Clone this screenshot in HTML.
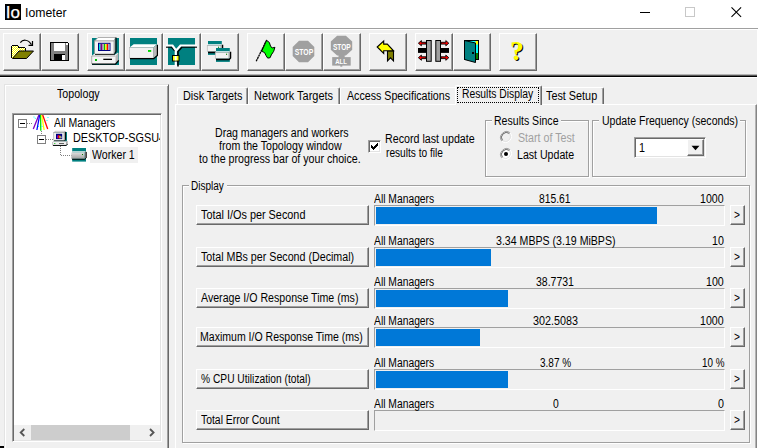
<!DOCTYPE html>
<html><head><meta charset="utf-8"><title>Iometer</title>
<style>
html,body{margin:0;padding:0;}
body{width:758px;height:448px;overflow:hidden;background:#f0f0f0;position:relative;font-family:"Liberation Sans",sans-serif;font-size:12.5px;color:#000;}
.a{position:absolute;}
.t{position:absolute;white-space:nowrap;line-height:14px;height:14px;transform-origin:0 0;display:block;}
.tb{position:absolute;top:33px;width:36px;height:36px;background:#f0f0f0;border-top:1px solid #fff;border-left:1px solid #fff;border-right:1px solid #696969;border-bottom:1px solid #696969;box-shadow:inset -1px -1px 0 #a0a0a0;}
.tb svg{position:absolute;left:0;top:0;}
.btn{position:absolute;background:#f0f0f0;border-top:1px solid #fff;border-left:1px solid #fff;border-right:1px solid #696969;border-bottom:1px solid #696969;box-shadow:inset -1px -1px 0 #a0a0a0;box-sizing:border-box;}
.sunk{position:absolute;box-sizing:border-box;border-top:1px solid #a0a0a0;border-left:1px solid #a0a0a0;border-right:1px solid #fff;border-bottom:1px solid #fff;}
.grp{position:absolute;box-sizing:border-box;border:1px solid #a0a0a0;box-shadow:1px 1px 0 #fff, inset 1px 1px 0 #fff;}
.bar{position:absolute;background:#0078d7;height:17px;}
.h{position:absolute;height:1px;}
.v{position:absolute;width:1px;}
</style></head><body>
<!-- title bar -->
<div class="a" style="left:0;top:0;width:758px;height:28px;background:#fff;"></div>
<div class="a" style="left:5px;top:4px;width:16px;height:16px;background:#000;"></div>
<div class="t" style="left:5.7px;top:5.8px;color:#fff;font-size:17px;-webkit-text-stroke:0.25px #fff;">Io</div>
<svg class="a" style="left:630px;top:0" width="128" height="28" viewBox="0 0 128 28">
<path d="M10 12.500h10" stroke="#000" stroke-width="1" fill="none"/>
<rect x="55.500" y="7.500" width="9" height="9" stroke="#c8c8c8" fill="none"/>
<path d="M101.500 7.300l9.600 9.600M111.100 7.300l-9.600 9.600" stroke="#000" stroke-width="1.100" fill="none"/>
</svg>
<!-- toolbar -->
<div class="h" style="left:0;top:28px;width:758px;background:#a0a0a0;"></div>
<div class="h" style="left:0;top:29px;width:758px;background:#fff;"></div>
<div class="h" style="left:0;top:74px;width:757px;background:#b4b4b4;"></div>
<div class="h" style="left:0;top:75px;width:757px;background:#555;"></div>
<div class="h" style="left:0;top:76px;width:757px;background:#000;"></div>
<div class="h" style="left:0;top:77px;width:757px;background:#fff;"></div>
<div class="v" style="left:757px;top:29px;height:419px;background:#fff;"></div>
<!-- toolbar buttons -->
<div class="tb" style="left:3px"><svg width="36" height="36" viewBox="4 34 36 36" shape-rendering="crispEdges">
<defs><pattern id="dot" width="2" height="2" patternUnits="userSpaceOnUse"><rect width="2" height="2" fill="#ffff00"/><rect width="1" height="1" fill="#fff"/><rect x="1" y="1" width="1" height="1" fill="#fff"/></pattern></defs>
<path d="M11.5 58V46.5l1-1h5l1 1v1h6l1 1v2.500" fill="url(#dot)" stroke="#000"/>
<path d="M12.500 58.500h14l7-7.500h-14.500z" fill="#808000" stroke="#000" shape-rendering="auto"/>
<path d="M20.300 42.600c2.200-3 7.500-4 11.200 2" fill="none" stroke="#000" stroke-width="1.200" shape-rendering="auto"/>
<path d="M28.500 45.300h4v-4.300" fill="none" stroke="#000" stroke-width="1.200" shape-rendering="auto"/>
</svg></div>
<div class="tb" style="left:41px"><svg width="36" height="36" viewBox="42 34 36 36" shape-rendering="crispEdges">
<path d="M50.500 42.500h17l1 1v17h-18z" fill="#808080" stroke="#000"/>
<rect x="54" y="43" width="11" height="8" fill="#fff"/>
<rect x="54" y="54" width="11" height="6" fill="#000"/>
<rect x="62" y="55" width="3" height="5" fill="#fff"/>
<rect x="66" y="43" width="2" height="2" fill="#fff"/>
</svg></div>
<div class="tb" style="left:87px"><svg width="36" height="36" viewBox="88 34 36 36">
<rect x="92" y="38" width="27" height="27" fill="#008080"/>
<path d="M94.500 41l3.500-3.500h17.500l-1.500 3.500z" fill="#fff" stroke="#909090" stroke-width=".7"/>
<path d="M114 41l1.500-3.500v13.500l-1.500 3z" fill="#b8b8b8"/>
<path d="M116 37.500v14l-2 3h-19.500" stroke="#000" stroke-width="1.200" fill="none"/>
<rect x="94.500" y="41" width="19.500" height="13" fill="#f4f4f4" stroke="#909090" stroke-width=".7"/>
<rect x="98.500" y="43.300" width="11.500" height="7.200" fill="#d0d0d0" stroke="#000080" stroke-width="1"/>
<rect x="99" y="44" width="1.500" height="6" fill="#00e0e0"/><rect x="100.500" y="44" width="2" height="6" fill="#800080"/><rect x="102.500" y="44" width="1.500" height="6" fill="#b0b0b0"/><rect x="104" y="44" width="1.200" height="6" fill="#00c000"/><rect x="105.200" y="44" width="1.500" height="6" fill="#ffff00"/><rect x="106.700" y="44" width="1.300" height="6" fill="#ff0000"/><rect x="108" y="44" width="1.500" height="6" fill="#b0a0c0"/>
<path d="M91.500 56l2.500-2h1v1h19.500l3.500-2.500v8l-3 3.500h-23.500z" fill="#f4f4f4"/>
<path d="M115.500 56l3-3.500v8l-3 3.500z" fill="#b8b8b8"/>
<path d="M91.700 64v-8h23.500" stroke="#909090" stroke-width=".7" fill="none"/>
<path d="M92 64.200h23.500l3.200-3.800" stroke="#000" stroke-width="1.200" fill="none"/>
<rect x="95" y="59" width="2" height="2" fill="#00c000"/>
<rect x="103.300" y="58.700" width="8.700" height="1.300" fill="#000"/>
</svg></div>
<div class="tb" style="left:125px"><svg width="36" height="36" viewBox="126 34 36 36">
<rect x="130" y="38" width="27" height="27" fill="#008080"/>
<path d="M129.500 47.500l4.200-3.200h23.300l-3.700 3.200z" fill="#fff"/>
<path d="M153.300 47.500l3.700-2.800v10.500l-3.700 3z" fill="#b8b8b8"/>
<rect x="129.500" y="47.500" width="23.800" height="10.600" fill="#f2f2f2" stroke="#a8a8a8" stroke-width=".5"/>
<path d="M130 58.700h23.700l3.700-3.200v-10.700" stroke="#000" fill="none" stroke-width="1.200"/>
<rect x="148" y="50" width="3.200" height="1.900" fill="#00d800"/>
</svg></div>
<div class="tb" style="left:163px"><svg width="36" height="36" viewBox="164 34 36 36">
<rect x="168" y="38" width="27" height="27" fill="#008080"/>
<path d="M166 47h5.500l3.500 4M197 47h-15l-4 4.500v15" stroke="#000" stroke-width="1.600" fill="none"/>
<path d="M166 45.500h6.500l3.300 4.500v16.500M197 45.500h-16.500l-4.300 5" stroke="#fff" stroke-width="2.200" fill="none" stroke-linejoin="miter"/>
<rect x="172.500" y="55.500" width="6.500" height="5.500" fill="#ffff00" stroke="#000" stroke-width="1"/>
<rect x="174.700" y="56" width="2" height="4.500" fill="#fff"/>
</svg></div>
<div class="tb" style="left:201px"><svg width="36" height="36" viewBox="202 34 36 36">
<rect x="208" y="41" width="13.800" height="13.900" fill="#008080"/>
<path d="M207.2 45.3l1-1h14l-1.200 1z" fill="#fff"/>
<path d="M220.9 45.3l1.200-1v6.500l-1.200 1z" fill="#b0b0b0"/>
<rect x="207.2" y="45.3" width="13.700" height="6.300" fill="#f2f2f2" stroke="#a0a0a0" stroke-width=".5"/>
<path d="M208 52.5h13.200l1.400-1.400v-6.400" stroke="#000" fill="none" stroke-width="1.300"/>
<rect x="218" y="46.7" width="1.100" height="1.100" fill="#008000"/>
<rect x="216" y="48" width="13.800" height="13.900" fill="#008080"/>
<path d="M215.2 52.3l1-1h14l-1.200 1z" fill="#fff"/>
<path d="M228.9 52.3l1.200-1v6.500l-1.200 1z" fill="#b0b0b0"/>
<rect x="215.2" y="52.3" width="13.700" height="6.300" fill="#f2f2f2" stroke="#a0a0a0" stroke-width=".5"/>
<path d="M216 59.5h13.200l1.400-1.400v-6.400" stroke="#000" fill="none" stroke-width="1.300"/>
<rect x="226" y="53.7" width="1.100" height="1.100" fill="#008000"/>
</svg></div>
<div class="tb" style="left:247px"><svg width="36" height="36" viewBox="248 34 36 36">
<path d="M256.200 61.300l10.500-21.300" stroke="#000" stroke-width="1.300" fill="none" stroke-dasharray="2.200 .5"/>
<path d="M266.600 40.400l2.700 2l1.200 3.600l1.600 2l2.800-.7l-1.200 4l-2.400 3.600l-1.200 2.800l-2.400.4l-1.600-2.400l-1.600-3.200l-2.800-1.200z" fill="#00ff00" stroke="#000" stroke-width="1"/>
</svg></div>
<div class="tb" style="left:285px"><svg width="36" height="36" viewBox="286 34 36 36">
<path d="M299.0 40.8L308.0 40.8L314.3 47.1L314.3 55.9L308.0 62.2L299.0 62.2L292.7 55.9L292.7 47.1z" fill="#a0a0a0"/>
<text x="304" y="55.300" font-family="Liberation Sans,sans-serif" font-weight="bold" font-size="9.500" fill="#fff" text-anchor="middle" textLength="18.500" lengthAdjust="spacingAndGlyphs">STOP</text>
</svg></div>
<div class="tb" style="left:323px"><svg width="36" height="36" viewBox="324 34 36 36">
<path d="M337.1 35.8L345.9 35.8L352.2 41.6L352.2 49.8L345.9 55.6L337.1 55.6L330.8 49.8L330.8 41.6z" fill="#a0a0a0"/>
<rect x="338.500" y="55" width="6.200" height="3" fill="#a0a0a0"/>
<text x="341.800" y="50" font-family="Liberation Sans,sans-serif" font-weight="bold" font-size="9" fill="#fff" text-anchor="middle" textLength="17.800" lengthAdjust="spacingAndGlyphs">STOP</text>
<rect x="332.200" y="57.100" width="18.500" height="8.500" fill="#a0a0a0"/>
<rect x="340.300" y="65" width="2" height="1.700" fill="#a0a0a0"/>
<text x="341" y="64" font-family="Liberation Sans,sans-serif" font-weight="bold" font-size="7" fill="#fff" text-anchor="middle" textLength="11.600" lengthAdjust="spacingAndGlyphs">ALL</text>
</svg></div>
<div class="tb" style="left:369px"><svg width="36" height="36" viewBox="370 34 36 36">
<path d="M387.500 51h6v9.800l-3-3l-3 3z" fill="#808000" stroke="#000" stroke-width="1.100"/>
<path d="M377.200 47l6.500-5.900v3h3.600l6.200 6.700h-9.800v2.700z" fill="#ffff00" stroke="#000" stroke-width="1.100" stroke-linejoin="miter"/>
</svg></div>
<div class="tb" style="left:415px"><svg width="36" height="36" viewBox="416 34 36 36">
<rect x="418" y="48" width="8.500" height="4.900" fill="#000"/><rect x="440.500" y="48" width="8.500" height="4.900" fill="#000"/>
<path d="M418.400 43.2l3-2.600v1.700h4.600v1.800h-4.600v1.700z" fill="#ff0000" stroke="#000" stroke-width=".9"/><path d="M448.800 43.2l-3-2.600v1.700h-4.800v1.800h4.800v1.700z" fill="#ff0000" stroke="#000" stroke-width=".9"/><path d="M418.400 57.7l3-2.600v1.700h4.600v1.800h-4.600v1.700z" fill="#ff0000" stroke="#000" stroke-width=".9"/><path d="M448.800 57.7l-3-2.600v1.700h-4.800v1.800h4.800v1.700z" fill="#ff0000" stroke="#000" stroke-width=".9"/>
<rect x="426.500" y="40.500" width="4.700" height="20.800" fill="#a0a0a0" stroke="#000" stroke-width="1"/>
<rect x="435.800" y="40.500" width="4.700" height="20.800" fill="#a0a0a0" stroke="#000" stroke-width="1"/>
</svg></div>
<div class="tb" style="left:453px"><svg width="36" height="36" viewBox="454 34 36 36">
<rect x="464.500" y="40.500" width="14" height="19" fill="#00ffff" stroke="#000" stroke-width="1"/>
<rect x="475.500" y="41" width="2.500" height="3.500" fill="#ffff00"/>
<rect x="475.500" y="53" width="2.500" height="6" fill="#008000"/>
<path d="M464.500 40.500l11 2.500v19.500l-11-3z" fill="#008080" stroke="#000" stroke-width="1"/>
<rect x="472" y="52" width="2" height="2" fill="#000"/>
</svg></div>
<div class="tb" style="left:499px"><div class="t" style="left:6px;top:2px;width:22px;text-align:center;font-family:'Liberation Serif',serif;font-weight:bold;font-size:27px;line-height:30px;height:30px;color:#ffff00;text-shadow:1px 1px 0 #000;">?</div></div>

<!-- left panel -->
<div class="a" style="left:4px;top:84px;width:165px;height:372px;box-sizing:border-box;border-top:1px solid #e3e3e3;border-left:1px solid #e3e3e3;border-right:1px solid #696969;border-bottom:1px solid #696969;box-shadow:inset 1px 1px 0 #fff, inset -1px -1px 0 #a0a0a0;"></div>
<div class="a" style="left:12px;top:113px;width:150px;height:329px;box-sizing:border-box;background:#fff;border-top:1px solid #a0a0a0;border-left:1px solid #a0a0a0;border-right:1px solid #fff;border-bottom:1px solid #fff;box-shadow:inset 1px 1px 0 #696969, inset -1px -1px 0 #e3e3e3;"></div>
<!-- selection -->
<div class="a" style="left:90px;top:147px;width:48px;height:16px;background:#f0f0f0;"></div>
<!-- scrollbar -->
<div class="a" style="left:14px;top:425px;width:146px;height:15px;background:#f0f0f0;"></div>
<div class="a" style="left:31px;top:425px;width:99px;height:15px;background:#cdcdcd;"></div>
<div class="a" style="left:0;top:446px;width:4px;height:2px;background:#000;"></div>
<svg class="a" style="left:14px;top:423px" width="146" height="17" viewBox="14 423 146 17">
<path d="M24.300 429l-3.600 3.500l3.600 3.500" stroke="#555" stroke-width="1.800" fill="none"/>
<path d="M150 429l3.600 3.500l-3.600 3.500" stroke="#555" stroke-width="1.800" fill="none"/>
</svg>
<!-- tree -->
<svg class="a" style="left:14px;top:115px" width="146" height="50" viewBox="14 115 146 50">
<g shape-rendering="crispEdges">
<path d="M27 123.500h6M41.500 131v5M46 139.500h7M60.500 146v9.500h11" stroke="#808080" stroke-dasharray="1 1" fill="none"/>
<rect x="18.500" y="119.500" width="8" height="8" fill="#fff" stroke="#808080"/>
<path d="M20 123.500h5" stroke="#000"/>
<rect x="37.500" y="135.500" width="8" height="8" fill="#fff" stroke="#808080"/>
<path d="M39 139.500h5" stroke="#000"/>
</g>
<!-- all managers icon -->
<g stroke-width="1.300" fill="none">
<path d="M38.900 115L33.300 129" stroke="#8000c0"/>
<path d="M39.700 115L36.900 130" stroke="#0000ff"/>
<path d="M40.600 115L40.800 130.700" stroke="#00e000"/>
<path d="M41.700 115L44.100 130" stroke="#ffff00"/>
<path d="M42.700 115L47.700 129" stroke="#ff0000"/>
</g>
<g fill="#00ffff"><rect x="33.500" y="116.500" width="1" height="1"/><rect x="34.800" y="117.800" width="1" height="1"/><rect x="47.500" y="117" width="1" height="1"/><rect x="46.500" y="120" width="1" height="1"/><rect x="41.500" y="126" width="1" height="1"/><rect x="38" y="126" width="1" height="1"/></g>
<!-- computer icon -->
<g>
<rect x="54" y="132" width="13" height="13.500" fill="#008080"/>
<path d="M53.800 132.500l1.200-1.200h10l-1 1.200z" fill="#fff" stroke="#909090" stroke-width=".5"/>
<path d="M64 132.500l1-1.200v8.200l-1 1.300z" fill="#a8a8a8"/>
<rect x="53.800" y="132.500" width="10.200" height="8" fill="#f0f0f0" stroke="#909090" stroke-width=".5"/>
<rect x="56" y="133.800" width="6.200" height="5.300" fill="#000080"/>
<rect x="57" y="135.500" width="1.200" height="2.800" fill="#8000c0"/><rect x="58.200" y="135" width="1.200" height="3.300" fill="#ff0000"/><rect x="59.400" y="135.800" width="1.200" height="2.500" fill="#ffff00"/><rect x="60.600" y="136.500" width="1" height="1.800" fill="#c0c0c0"/>
<path d="M54 141h10.500l1-1.200v-8" stroke="#000" fill="none" stroke-width=".9"/>
<path d="M52.600 142.200l1.200-1h13.500v2.800l-1.200 1.200h-13.500z" fill="#f0f0f0" stroke="#909090" stroke-width=".5"/>
<path d="M66 142.200l1.300-1v2.800l-1.300 1.200z" fill="#a8a8a8"/>
<path d="M53 145.500h13.200l1.500-1.500" stroke="#000" fill="none" stroke-width=".9"/>
<rect x="54.300" y="143" width="1" height="1" fill="#00c000"/>
<rect x="59" y="143" width="5" height=".8" fill="#404040"/>
</g>
<!-- worker icon -->
<g>
<defs><linearGradient id="wg" x1="0" y1="0" x2="0" y2="1"><stop offset="0" stop-color="#e0e0e0"/><stop offset="1" stop-color="#a0a0a0"/></linearGradient></defs>
<rect x="72.200" y="148" width="13.800" height="13.600" fill="#008080"/>
<path d="M71.300 152.400l1.200-1.200h13.500l-1.400 1.200z" fill="#f0f0f0"/>
<path d="M84.600 152.400l1.400-1.200v6.500l-1.400 1.200z" fill="#808080"/>
<rect x="71.300" y="152.400" width="13.300" height="6.400" fill="url(#wg)"/>
<path d="M72 159.300h12.800l1.500-1.400v-6" stroke="#000" fill="none" stroke-width=".9"/>
<rect x="82" y="154" width="1" height="1" fill="#008000"/>
</g>
</svg>

<!-- tab page -->
<div class="a" style="left:175px;top:104px;width:582px;height:344px;box-sizing:border-box;border-top:1px solid #fff;border-left:1px solid #fff;border-right:1px solid #858585;box-shadow:inset -1px 0 0 #b4b4b4;"></div>
<!-- unselected tabs -->
<div class="a" style="left:177px;top:87px;width:71px;height:17px;box-sizing:border-box;border-top:1px solid #fff;border-left:1px solid #fff;border-right:1px solid #696969;box-shadow:inset -1px 0 0 #a0a0a0;border-radius:2px 2px 0 0;"></div>
<div class="a" style="left:248px;top:87px;width:92px;height:17px;box-sizing:border-box;border-top:1px solid #fff;border-left:1px solid #fff;border-right:1px solid #696969;box-shadow:inset -1px 0 0 #a0a0a0;border-radius:2px 2px 0 0;"></div>
<div class="a" style="left:340px;top:87px;width:117px;height:17px;box-sizing:border-box;border-top:1px solid #fff;border-left:1px solid #fff;border-radius:2px 2px 0 0;"></div>
<div class="a" style="left:541px;top:87px;width:63px;height:17px;box-sizing:border-box;border-top:1px solid #fff;border-right:1px solid #696969;box-shadow:inset -1px 0 0 #a0a0a0;border-radius:2px 2px 0 0;"></div>
<!-- selected tab -->
<div class="a" style="left:455px;top:85px;width:87px;height:20px;box-sizing:border-box;background:#f0f0f0;border-top:1px solid #fff;border-left:1px solid #fff;border-right:1px solid #696969;box-shadow:inset -1px 0 0 #a0a0a0;border-radius:2px 2px 0 0;"></div>
<div class="a" style="left:457px;top:87px;width:82px;height:16px;box-sizing:border-box;border:1px dotted #000;"></div>
<!-- checkbox -->
<div class="a" style="left:368px;top:140px;width:13px;height:13px;box-sizing:border-box;background:#fff;border-top:1px solid #a0a0a0;border-left:1px solid #a0a0a0;border-right:1px solid #fff;border-bottom:1px solid #fff;box-shadow:inset 1px 1px 0 #696969, inset -1px -1px 0 #e3e3e3;"></div>
<svg class="a" style="left:368px;top:140px" width="13" height="13" viewBox="0 0 13 13" shape-rendering="crispEdges"><path d="M3 5v3M4 6v3M5 7v3M6 6v3M7 5v3M8 4v3M9 3v3" stroke="#000" stroke-width="1" transform="translate(.5 0)"/></svg>
<!-- group boxes -->
<div class="grp" style="left:485px;top:120px;width:104px;height:57px;"></div>
<div class="grp" style="left:592px;top:120px;width:154px;height:57px;"></div>
<div class="grp" style="left:182px;top:185px;width:568px;height:258px;"></div>
<!-- radios -->
<svg class="a" style="left:499px;top:130px" width="14" height="32" viewBox="499 130 14 32">
<circle cx="506" cy="137" r="5.500" fill="#f0f0f0"/>
<path d="M501.800 141.200a6 6 0 0 1 8.400-8.400" stroke="#a0a0a0" fill="none"/>
<path d="M502.500 140.500a5 5 0 0 1 7-7" stroke="#696969" fill="none"/>
<path d="M501.800 141.200a6 6 0 0 0 8.400-8.400" stroke="#fff" fill="none"/>
<path d="M502.500 140.500a5 5 0 0 0 7-7" stroke="#e3e3e3" fill="none"/>
<circle cx="506" cy="154" r="5.500" fill="#fff"/>
<path d="M501.800 158.200a6 6 0 0 1 8.400-8.400" stroke="#a0a0a0" fill="none"/>
<path d="M502.500 157.500a5 5 0 0 1 7-7" stroke="#696969" fill="none"/>
<path d="M501.800 158.200a6 6 0 0 0 8.400-8.400" stroke="#fff" fill="none"/>
<path d="M502.500 157.500a5 5 0 0 0 7-7" stroke="#e3e3e3" fill="none"/>
<circle cx="506" cy="154" r="2" fill="#000"/>
</svg>
<!-- combo -->
<div class="a" style="left:634px;top:137px;width:72px;height:21px;box-sizing:border-box;background:#fff;border-top:1px solid #a0a0a0;border-left:1px solid #a0a0a0;border-right:1px solid #fff;border-bottom:1px solid #fff;box-shadow:inset 1px 1px 0 #696969, inset -1px -1px 0 #e3e3e3;"></div>
<div class="btn" style="left:687px;top:139px;width:17px;height:17px;"></div>
<svg class="a" style="left:687px;top:139px" width="16" height="17" viewBox="0 0 16 17"><path d="M4.500 6.800h8l-4 4.400z" fill="#000"/></svg>

<div class="sunk" style="left:374px;top:205px;width:351px;height:21px;"></div>
<div class="bar" style="left:376px;top:207px;width:281px;"></div>
<div class="btn" style="left:196px;top:205px;width:173px;height:20px;"></div>
<div class="btn" style="left:730px;top:205px;width:15px;height:20px;"></div>
<span class="t" style="left:734px;top:208px;font-size:12px;transform:scaleX(.85);">&gt;</span>
<div class="sunk" style="left:374px;top:247px;width:351px;height:21px;"></div>
<div class="bar" style="left:376px;top:249px;width:114.6px;"></div>
<div class="btn" style="left:196px;top:247px;width:173px;height:20px;"></div>
<div class="btn" style="left:730px;top:247px;width:15px;height:20px;"></div>
<span class="t" style="left:734px;top:250px;font-size:12px;transform:scaleX(.85);">&gt;</span>
<div class="sunk" style="left:374px;top:288px;width:351px;height:21px;"></div>
<div class="bar" style="left:376px;top:290px;width:131.7px;"></div>
<div class="btn" style="left:196px;top:288px;width:173px;height:20px;"></div>
<div class="btn" style="left:730px;top:288px;width:15px;height:20px;"></div>
<span class="t" style="left:734px;top:291px;font-size:12px;transform:scaleX(.85);">&gt;</span>
<div class="sunk" style="left:374px;top:327px;width:351px;height:21px;"></div>
<div class="bar" style="left:376px;top:329px;width:103.7px;"></div>
<div class="btn" style="left:196px;top:327px;width:173px;height:20px;"></div>
<div class="btn" style="left:730px;top:327px;width:15px;height:20px;"></div>
<span class="t" style="left:734px;top:330px;font-size:12px;transform:scaleX(.85);">&gt;</span>
<div class="sunk" style="left:374px;top:369px;width:351px;height:21px;"></div>
<div class="bar" style="left:376px;top:371px;width:131.7px;"></div>
<div class="btn" style="left:196px;top:369px;width:173px;height:20px;"></div>
<div class="btn" style="left:730px;top:369px;width:15px;height:20px;"></div>
<span class="t" style="left:734px;top:372px;font-size:12px;transform:scaleX(.85);">&gt;</span>
<div class="sunk" style="left:374px;top:410px;width:351px;height:21px;"></div>
<div class="btn" style="left:196px;top:410px;width:173px;height:20px;"></div>
<div class="btn" style="left:730px;top:410px;width:15px;height:20px;"></div>
<span class="t" style="left:734px;top:413px;font-size:12px;transform:scaleX(.85);">&gt;</span>
<span class="t" style="left:25.28px;top:5.84px;transform:scaleX(1.0205);font-size:12px;">Iometer</span>
<span class="t" style="left:57.00px;top:87.17px;transform:scaleX(0.8526);">Topology</span>
<span class="t" style="left:54.00px;top:115.67px;transform:scaleX(0.8391);">All Managers</span>
<div class="a" style="left:0;top:0;width:160px;height:448px;overflow:hidden;"><span class="t" style="left:72.83px;top:130.67px;transform:scaleX(0.8687);">DESKTOP-SGSU4</span></div>
<span class="t" style="left:92.30px;top:147.67px;transform:scaleX(0.8471);">Worker 1</span>
<span class="t" style="left:182.63px;top:88.67px;transform:scaleX(0.8664);">Disk Targets</span>
<span class="t" style="left:254.42px;top:88.67px;transform:scaleX(0.8770);">Network Targets</span>
<span class="t" style="left:346.50px;top:88.67px;transform:scaleX(0.8521);">Access Specifications</span>
<span class="t" style="left:461.87px;top:86.67px;transform:scaleX(0.8266);">Results Display</span>
<span class="t" style="left:546.00px;top:88.67px;transform:scaleX(0.8662);">Test Setup</span>
<span class="t" style="left:215.35px;top:125.67px;transform:scaleX(0.8462);">Drag managers and workers</span>
<span class="t" style="left:219.40px;top:138.67px;transform:scaleX(0.8495);">from the Topology window</span>
<span class="t" style="left:199.30px;top:151.67px;transform:scaleX(0.8525);">to the progress bar of your choice.</span>
<span class="t" style="left:385.44px;top:132.47px;transform:scaleX(0.8550);">Record last update</span>
<span class="t" style="left:386.30px;top:145.57px;transform:scaleX(0.8118);">results to file</span>
<div class="a" style="left:492px;top:116px;width:69px;height:12px;background:#f0f0f0;"></div><span class="t" style="left:493.76px;top:113.67px;transform:scaleX(0.8440);">Results Since</span>
<span class="t" style="left:517.60px;top:130.67px;transform:scaleX(0.8539);color:#a0a0a0;">Start of Test</span>
<span class="t" style="left:516.75px;top:147.67px;transform:scaleX(0.8472);">Last Update</span>
<div class="a" style="left:599px;top:116px;width:141px;height:12px;background:#f0f0f0;"></div><span class="t" style="left:601.90px;top:113.67px;transform:scaleX(0.8439);">Update Frequency (seconds)</span>
<span class="t" style="left:639.30px;top:140.67px;transform:scaleX(0.8600);">1</span>
<div class="a" style="left:189px;top:181px;width:38px;height:12px;background:#f0f0f0;"></div><span class="t" style="left:191.20px;top:178.97px;transform:scaleX(0.8003);">Display</span>
<span class="t" style="left:200.50px;top:207.67px;transform:scaleX(0.8690);">Total I/Os per Second</span>
<span class="t" style="left:374.30px;top:191.67px;transform:scaleX(0.8253);">All Managers</span>
<span class="t" style="left:539.40px;top:191.67px;transform:scaleX(0.8255);">815.61</span>
<span class="t" style="left:700.30px;top:191.67px;transform:scaleX(0.8472);">1000</span>
<span class="t" style="left:200.50px;top:249.67px;transform:scaleX(0.8544);">Total MBs per Second (Decimal)</span>
<span class="t" style="left:374.30px;top:233.67px;transform:scaleX(0.8253);">All Managers</span>
<span class="t" style="left:496.00px;top:233.67px;transform:scaleX(0.8476);">3.34 MBPS (3.19 MiBPS)</span>
<span class="t" style="left:712.00px;top:233.67px;transform:scaleX(0.8529);">10</span>
<span class="t" style="left:200.50px;top:290.67px;transform:scaleX(0.8499);">Average I/O Response Time (ms)</span>
<span class="t" style="left:374.30px;top:274.67px;transform:scaleX(0.8253);">All Managers</span>
<span class="t" style="left:536.00px;top:274.67px;transform:scaleX(0.8401);">38.7731</span>
<span class="t" style="left:706.10px;top:274.67px;transform:scaleX(0.8515);">100</span>
<span class="t" style="left:199.66px;top:329.67px;transform:scaleX(0.8431);">Maximum I/O Response Time (ms)</span>
<span class="t" style="left:374.30px;top:313.67px;transform:scaleX(0.8253);">All Managers</span>
<span class="t" style="left:533.00px;top:313.67px;transform:scaleX(0.8623);">302.5083</span>
<span class="t" style="left:700.30px;top:313.67px;transform:scaleX(0.8472);">1000</span>
<span class="t" style="left:200.50px;top:371.67px;transform:scaleX(0.8178);">% CPU Utilization (total)</span>
<span class="t" style="left:374.30px;top:355.67px;transform:scaleX(0.8253);">All Managers</span>
<span class="t" style="left:540.00px;top:355.67px;transform:scaleX(0.7989);">3.87 %</span>
<span class="t" style="left:701.50px;top:355.67px;transform:scaleX(0.7894);">10 %</span>
<span class="t" style="left:200.50px;top:412.67px;transform:scaleX(0.8315);">Total Error Count</span>
<span class="t" style="left:374.30px;top:396.67px;transform:scaleX(0.8253);">All Managers</span>
<span class="t" style="left:552.80px;top:396.67px;transform:scaleX(0.8286);">0</span>
<span class="t" style="left:717.90px;top:396.67px;transform:scaleX(0.8571);">0</span>
</body></html>
